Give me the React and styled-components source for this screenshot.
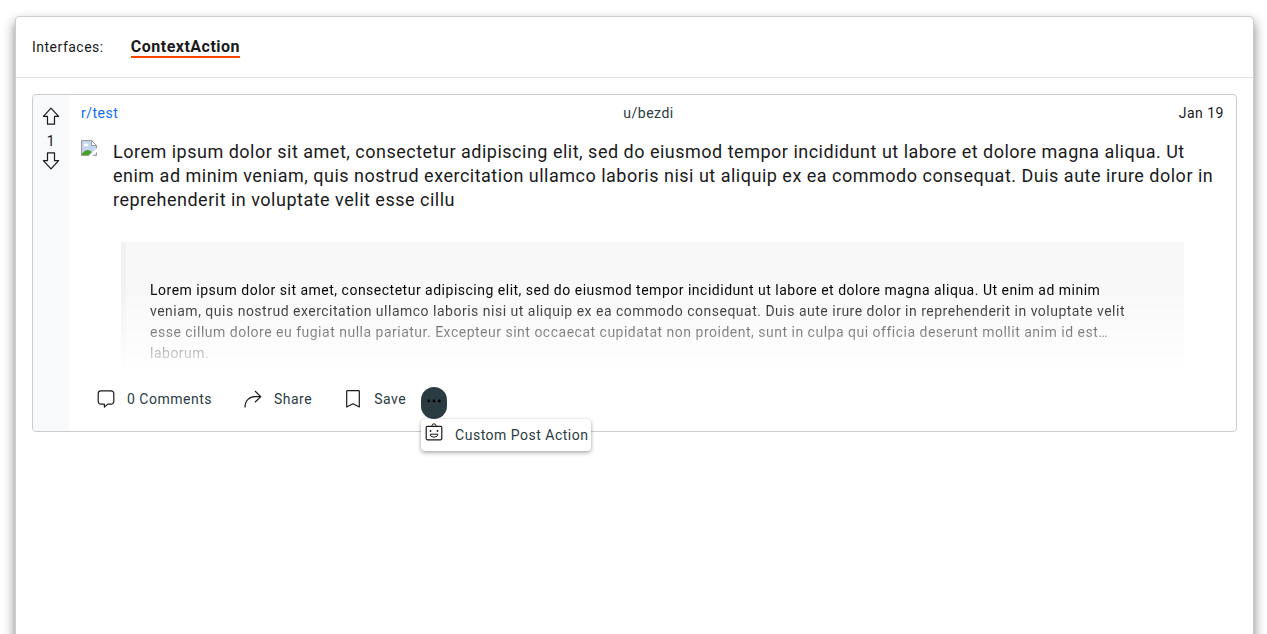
import React from "react";
import styled, { createGlobalStyle } from "styled-components";

const GlobalStyle = createGlobalStyle`
  *, *::before, *::after { box-sizing: border-box; }
  body {
    margin: 0;
    overflow-x: hidden;
    background: #fff;
    color: #1a1a1b;
    font-family: Roboto, "Liberation Sans", sans-serif;
    font-size: 16px;
    letter-spacing: 0.03125em;
  }
`;

const Panel = styled.main`
  min-height: 100vh;
  margin: 16px 13px 0 15px;
  border: 1px solid #ccc;
  border-radius: 4px;
  background: #fff;
  box-shadow: 0 6px 12px rgba(0, 0, 0, 0.5);
  font-size: 14px;
  line-height: 20px;
`;

const Tabs = styled.nav`
  display: flex;
  align-items: center;
  gap: 27px;
  height: 61px;
  padding: 0 16px;
  border-bottom: 1px solid #e0e0e0;
`;

const Tab = styled.a`
  padding-top: 2px;
  border-bottom: 2px solid #ff4500;
  color: inherit;
  font-size: 16px;
  font-weight: 700;
  line-height: 18px;
  text-decoration: none;
`;

const Card = styled.article`
  display: flex;
  margin: 16px;
  border: 1px solid #ccc;
  border-radius: 4px;
`;

const Votes = styled.div`
  display: flex;
  flex-direction: column;
  align-items: center;
  width: 36px;
  padding-top: 12px;
  border-radius: 4px 0 0 4px;
  background: #f8f9fa;
`;

const IconButton = styled.button`
  display: flex;
  padding: 0;
  border: 0;
  background: none;
  color: inherit;
  cursor: pointer;
`;

const Score = styled.span`
  padding: 6px 0 1px;
`;

const Body = styled.div`
  flex: 1;
  min-width: 0;
  padding: 8px 12px 12px;
`;

const Meta = styled.div`
  display: flex;
  justify-content: space-between;
`;

const MetaLink = styled.a`
  color: ${(p) => (p.$accent ? "#0f6cf5" : "#2a3c42")};
  text-decoration: none;
`;

const TitleRow = styled.div`
  display: flex;
  gap: 16px;
  margin-top: 17px;
`;

const Title = styled.h1`
  margin: 0;
  font-size: 18px;
  font-weight: 400;
  line-height: 24px;
`;

const Excerpt = styled.blockquote`
  height: 136px;
  margin: 30px 40px 0;
  padding: 38px 32px 0 24px;
  border-left: 5px solid #f2f2f2;
  background: #f8f8f8;
  color: #000;
  line-height: 21px;
  mask-image: linear-gradient(180deg, #000 35%, transparent 98%);
`;

const Actions = styled.div`
  display: flex;
  align-items: flex-start;
  height: 32px;
  padding-left: 16px;
  margin-top: 9px;
`;

const Action = styled.button`
  display: flex;
  align-items: center;
  gap: 12px;
  height: 24px;
  margin-right: ${(p) => (p.$last ? 15 : 32)}px;
  padding: 0;
  border: 0;
  background: none;
  color: #2a3c42;
  font: inherit;
  letter-spacing: inherit;
  white-space: nowrap;
  cursor: pointer;

  svg { color: #1a1a1b; }
`;

const MenuAnchor = styled.div`
  position: relative;
`;

const MoreButton = styled.button`
  display: flex;
  align-items: center;
  justify-content: center;
  width: 26px;
  height: 32px;
  padding: 0 0 4px;
  border: 0;
  border-radius: 13px;
  background: #2a3c42;
  color: #000;
  cursor: pointer;
`;

const Menu = styled.div`
  position: absolute;
  top: 100%;
  left: 0;
  padding: 0 2px 0 4px;
  border-radius: 4px;
  background: #fff;
  box-shadow: 0 2px 4px rgba(0, 0, 0, 0.3), 0 0 2px rgba(0, 0, 0, 0.15);
`;

const MenuItem = styled(Action)`
  width: 100%;
  height: 32px;
  margin: 0;

  svg { margin-bottom: 6px; }
`;

const Icon = ({ children }) => (
  <svg width="18" height="18" viewBox="0 0 18 18" fill="none" stroke="currentColor" strokeWidth="1.2" strokeLinejoin="round" aria-hidden="true">
    {children}
  </svg>
);

const arrow = "M9 1.2 L16.6 9.4 H12.5 V17.2 H5.5 V9.4 H1.4 Z";

const UpIcon = () => <Icon><path d={arrow} /></Icon>;
const DownIcon = () => <Icon><path d={arrow} transform="rotate(180 9 9)" /></Icon>;
const CommentIcon = () => (
  <Icon><path d="M3.9 .9H14.1A2.7 2.7 0 0 1 16.8 3.6V11.4A2.7 2.7 0 0 1 14.1 14.1H10.8L7.4 17.1V14.1H3.9A2.7 2.7 0 0 1 1.2 11.4V3.6A2.7 2.7 0 0 1 3.9 .9Z" /></Icon>
);
const ShareIcon = () => (
  <Icon><path d="M1 17.5C1 10.5 5.5 6.6 11 6.6H16.4M11 1L16.8 6.6L11 12.2" /></Icon>
);
const SaveIcon = () => (
  <Icon><path d="M3.3 .7H14.7Q15.3 .7 15.3 1.3V17L9 13.8L2.7 17V1.3Q2.7 .7 3.3 .7Z" /></Icon>
);
const BotIcon = () => (
  <Icon>
    <rect x="1.2" y="3.4" width="15.6" height="13.4" rx="1.2" />
    <path d="M7 3.4V2.8A2 2 0 0 1 11 2.8V3.4M5.1 11.2H12.9Q12.7 14.2 9 14.2T5.1 11.2Z" strokeWidth="1" />
    <circle cx="5.5" cy="8" r=".9" fill="currentColor" stroke="none" />
    <circle cx="12.5" cy="8" r=".9" fill="currentColor" stroke="none" />
  </Icon>
);
const DotsIcon = () => (
  <svg width="16" height="16" viewBox="0 0 16 16" fill="currentColor" aria-hidden="true">
    <circle cx="2.8" cy="8" r="1.4" />
    <circle cx="8" cy="8" r="1.4" />
    <circle cx="13.2" cy="8" r="1.4" />
  </svg>
);

const Thumb = styled.svg`
  flex: none;
`;

const MissingThumbnail = () => (
  <Thumb width="16" height="16" viewBox="0 0 16 16" role="img" aria-label="Thumbnail">
    <path d="M.5 .5H10.5L15.5 5.5V15.5H.5Z" fill="#c3d4f2" stroke="#9a9a9a" />
    <path d="M10.5 .5V5.5H15.5Z" fill="#fff" stroke="#9a9a9a" />
    <ellipse cx="5" cy="5" rx="2.5" ry="1.4" fill="#fff" />
    <path d="M1 15V13.4Q6 7.5 11 12L8 15Z" fill="#4aa02c" />
    <path d="M16 8L7.5 16H11.5L16 12Z" fill="#fff" />
  </Thumb>
);

export default function App() {
  return (
    <>
      <GlobalStyle />
      <Panel>
        <Tabs>
          <span>Interfaces:</span>
          <Tab href="#context-action">ContextAction</Tab>
        </Tabs>
        <Card>
          <Votes>
            <IconButton aria-label="Upvote"><UpIcon /></IconButton>
            <Score>1</Score>
            <IconButton aria-label="Downvote"><DownIcon /></IconButton>
          </Votes>
          <Body>
            <Meta>
              <MetaLink $accent href="#test">r/test</MetaLink>
              <MetaLink href="#bezdi">u/bezdi</MetaLink>
              <time>Jan 19</time>
            </Meta>
            <TitleRow>
              <MissingThumbnail />
              <Title>
                Lorem ipsum dolor sit amet, consectetur adipiscing elit, sed do eiusmod tempor incididunt ut
                labore et dolore magna aliqua. Ut enim ad minim veniam, quis nostrud exercitation ullamco
                laboris nisi ut aliquip ex ea commodo consequat. Duis aute irure dolor in reprehenderit in
                voluptate velit esse cillu
              </Title>
            </TitleRow>
            <Excerpt>
              Lorem ipsum dolor sit amet, consectetur adipiscing elit, sed do eiusmod tempor incididunt ut
              labore et dolore magna aliqua. Ut enim ad minim veniam, quis nostrud exercitation ullamco
              laboris nisi ut aliquip ex ea commodo consequat. Duis aute irure dolor in reprehenderit in
              voluptate velit esse cillum dolore eu fugiat nulla pariatur. Excepteur sint occaecat cupidatat
              non proident, sunt in culpa qui officia deserunt mollit anim id est… laborum.
            </Excerpt>
            <Actions>
              <Action><CommentIcon />0 Comments</Action>
              <Action><ShareIcon />Share</Action>
              <Action $last><SaveIcon />Save</Action>
              <MenuAnchor>
                <MoreButton aria-label="More actions" aria-expanded="true"><DotsIcon /></MoreButton>
                <Menu>
                  <MenuItem><BotIcon />Custom Post Action</MenuItem>
                </Menu>
              </MenuAnchor>
            </Actions>
          </Body>
        </Card>
      </Panel>
    </>
  );
}
